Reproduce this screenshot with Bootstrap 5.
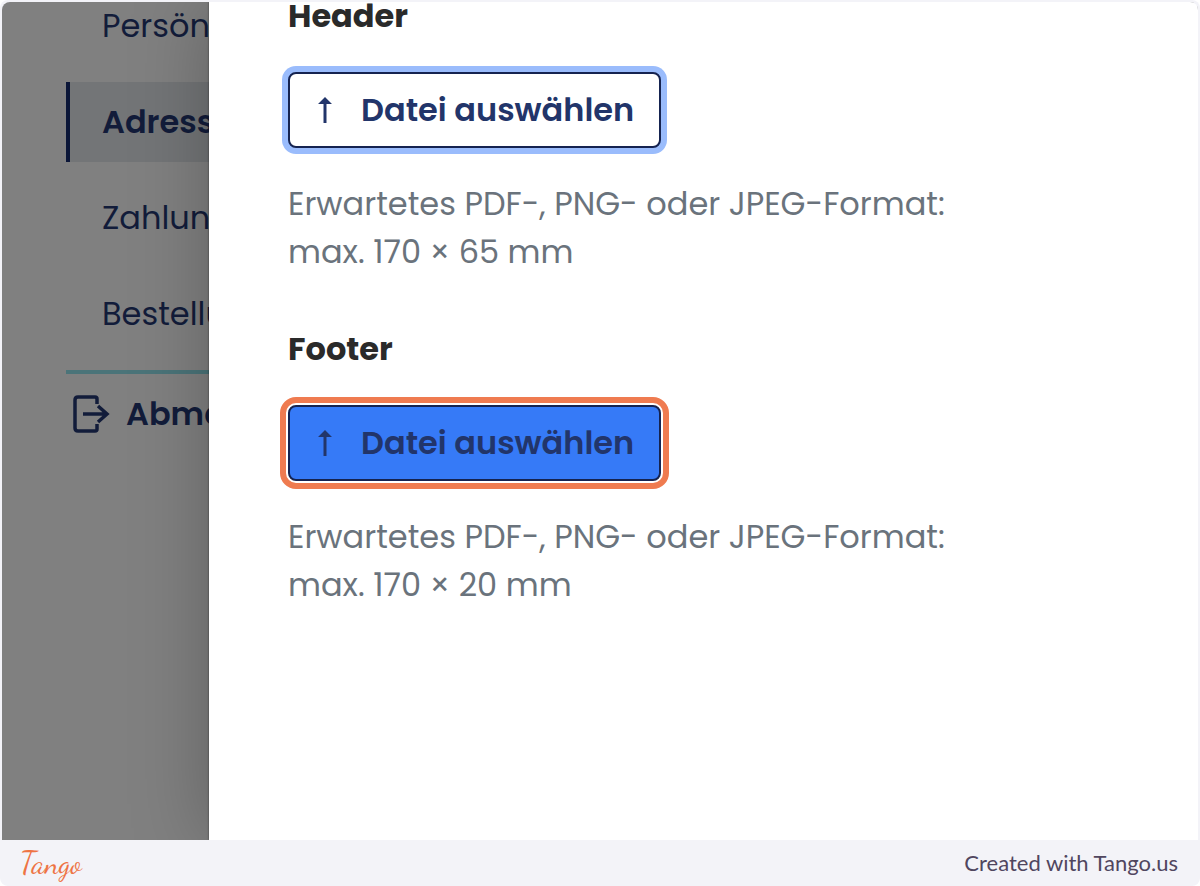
<!DOCTYPE html>
<html lang="de">
<head>
<meta charset="utf-8">
<meta name="viewport" content="width=device-width, initial-scale=1">
<title>Datei auswählen</title>
<link href="https://cdn.jsdelivr.net/npm/bootstrap@5.3.0/dist/css/bootstrap.min.css" rel="stylesheet">
<style>
  body { background: #fff; font-family: Poppins, Inter, sans-serif; font-size: 32px; line-height: 48px; }
  .frame { background: #f3f3f8; border-radius: 8px; padding: 2px 2px 0; }
  .stage { border-radius: 8px 8px 0 0; }
  .side { width: 207px; background: #808080; padding-left: 64px; }
  .side a { color: #121c3a; text-decoration: none; white-space: nowrap; }
  .side .entry { padding: 16px 0 16px 36px; margin-bottom: 16px; }
  .side .entry:first-child { padding-top: 0; }
  .side .current { background: #737577; border-left: 4px solid #0b1638; padding-left: 32px; font-weight: 600; }
  .side .logout { border-top: 4px solid #4b7479; padding: 16px 0 0 4px; font-weight: 600; gap: 16px; }
  .panel { background: #fff; padding: 0 79px 48px; box-shadow: 0 0 72px rgba(0,0,0,.25), 0 0 2px rgba(0,0,0,.5); }
  .panel h2 { font-size: 32px; font-weight: 700; line-height: 28px; color: #2a2a2a; margin: 0 0 42px; }
  .panel p { color: #6a737c; font-size: 32px; margin: 32px 0 59px; max-width: 760px; }
  .pick { width: 373px; height: 76px; padding: 0 24px 0 27px; gap: 28px; border: 2px solid #152350; border-radius: 8px; color: #22356a; font-size: 32px; font-weight: 600; white-space: nowrap; }
  .pick:hover { color: #22356a; border-color: #152350; }
  .pick-focus, .pick-focus:hover { background: #fff; box-shadow: 0 0 0 6px #9abcfc; }
  .pick-active, .pick-active:hover { background: #367af7; outline: 6px solid #ef7b50; outline-offset: 2px; }
  .credit { height: 46px; padding: 0 20px 0 18px; color: #50465f; font-family: Lato, sans-serif; font-size: 22px; line-height: 24px; }
  .brand { color: #ee7444; font-family: "Dancing Script", Lato, cursive; font-size: 30px; }
</style>
</head>
<body>
<div class="frame d-flex flex-column min-vh-100">
  <div class="stage d-flex flex-grow-1 overflow-hidden">
    <nav class="side d-flex flex-column flex-shrink-0" aria-label="Konto">
      <a class="entry" href="#">Persön</a>
      <a class="entry current" href="#">Adress</a>
      <a class="entry" href="#">Zahlun</a>
      <a class="entry" href="#">Bestellu</a>
      <a class="logout d-flex align-items-center" href="#">
        <svg class="flex-shrink-0" width="40" height="40" viewBox="0 0 40 40" fill="none" stroke="#121c3a" stroke-width="3.500" aria-hidden="true"><path d="M27 10V5Q27 3 25 3H8Q5 3 5 6V34Q5 37 8 37H25Q27 37 27 35V30M13 20H37M28 12L37 20L28 28"/></svg>
        <span>Abme</span>
      </a>
    </nav>
    <main class="panel flex-grow-1 position-relative">
      <h2>Header</h2>
      <button type="button" class="btn pick pick-focus d-flex align-items-center">
        <svg class="flex-shrink-0" width="16" height="26" viewBox="0 0 16 26" aria-hidden="true"><path d="M8 0L15 7H9.500V26H6.500V7H1Z" fill="#22356a"/></svg>
        <span>Datei auswählen</span>
      </button>
      <p>Erwartetes PDF-, PNG- oder JPEG-Format: <br>max. 170 × 65 mm</p>
      <h2>Footer</h2>
      <button type="button" class="btn pick pick-active d-flex align-items-center">
        <svg class="flex-shrink-0" width="16" height="26" viewBox="0 0 16 26" aria-hidden="true"><path d="M8 0L15 7H9.500V26H6.500V7H1Z" fill="#22356a"/></svg>
        <span>Datei auswählen</span>
      </button>
      <p class="mb-0">Erwartetes PDF-, PNG- oder JPEG-Format: <br>max. 170 × 20 mm</p>
    </main>
  </div>
  <footer class="credit d-flex align-items-center justify-content-between">
    <span class="brand">Tango</span>
    <span>Created with Tango.us</span>
  </footer>
</div>
<script src="https://cdn.jsdelivr.net/npm/bootstrap@5.3.0/dist/js/bootstrap.bundle.min.js"></script>
</body>
</html>
